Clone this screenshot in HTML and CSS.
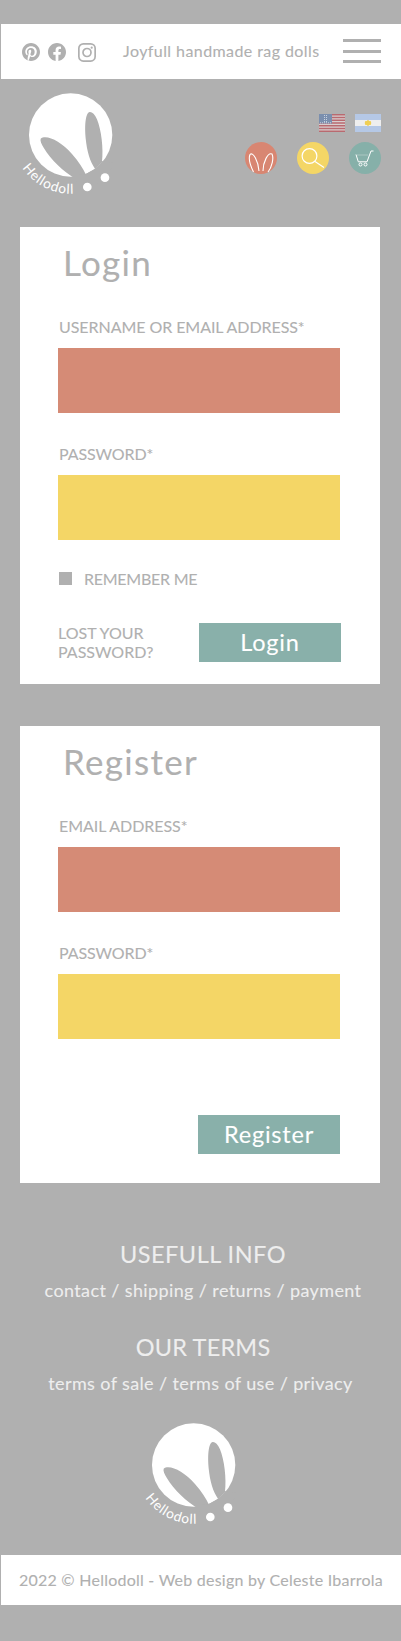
FILE: index.html
```html
<!DOCTYPE html>
<html lang="en">
<head>
<meta charset="utf-8">
<title>Hellodoll - Login</title>
<link rel="stylesheet" href="styles.css">
</head>
<body>
<svg width="0" height="0" class="defs" aria-hidden="true">
  <symbol id="logo" viewBox="60 30 280 320">
    <circle cx="212" cy="165" r="125" fill="#fff"/>
    <path d="M122 176C138 162 182 182 216 222C236 245 250 266 258 284L226 296C190 276 152 238 132 205C124 192 120 182 122 176Z" fill="#b0b0b0"/>
    <path d="M269 96C257 98 253 135 257 175C261 215 270 245 285 266L306 246C311 205 304 150 291 118C284 102 276 95 269 96Z" fill="#b0b0b0"/>
    <path d="M222 287L258 282L285 266L308 243L345 250L300 310L222 305Z" fill="#b0b0b0"/>
    <circle cx="315" cy="293" r="13" fill="#fff"/>
    <circle cx="262" cy="321" r="13" fill="#fff"/>
    <path id="arc" d="M67 264A176 176 0 0 0 242 339" fill="none"/>
    <text class="logo-text"><textPath href="#arc">Hellodoll</textPath></text>
  </symbol>
</svg>
<header class="topbar">
  <div class="social">
    <svg class="pin" width="18" height="18" viewBox="0 0 24 24"><path fill="#b0b0b0" d="M12 0C5.4 0 0 5.4 0 12c0 5.1 3.2 9.4 7.6 11.2-.1-.9-.2-2.4 0-3.4l1.4-6s-.4-.7-.4-1.8c0-1.700 1-2.900 2.200-2.900 1 0 1.500.8 1.500 1.700 0 1-.7 2.600-1 4-.3 1.200.6 2.200 1.800 2.200 2.100 0 3.800-2.200 3.800-5.500 0-2.900-2.100-4.900-5-4.900-3.400 0-5.400 2.600-5.400 5.200 0 1 .4 2.100.9 2.700.1.100.1.200.1.300l-.3 1.400c-.1.200-.2.300-.4.200-1.500-.7-2.400-2.900-2.400-4.700 0-3.800 2.800-7.300 7.900-7.300 4.200 0 7.400 3 7.400 6.900 0 4.100-2.600 7.500-6.200 7.500-1.200 0-2.400-.6-2.700-1.400l-.8 2.900c-.3 1-1 2.300-1.500 3.100 1.100.4 2.300.6 3.500.6 6.600 0 12-5.400 12-12S18.600 0 12 0z"/></svg>
    <svg class="fb" width="18" height="18" viewBox="0 0 24 24"><path fill="#b0b0b0" d="M24 12.070C24 5.410 18.630 0 12 0S0 5.400 0 12.070C0 18.100 4.390 23.100 10.130 24v-8.440H7.080v-3.490h3.040V9.410c0-3.020 1.800-4.700 4.540-4.700 1.310 0 2.680.24 2.680.24v2.970h-1.500c-1.500 0-1.960.93-1.960 1.890v2.260h3.320l-.53 3.500h-2.800V24C19.620 23.100 24 18.100 24 12.070"/></svg>
    <svg class="ig" width="18" height="19" viewBox="0 0 18 19"><g fill="none" stroke="#b0b0b0" stroke-width="1.700"><rect x=".85" y=".85" width="16.300" height="17.200" rx="4.500"/><circle cx="9" cy="9.500" r="4"/></g><circle cx="13.700" cy="4.700" r="1.100" fill="#b0b0b0"/></svg>
  </div>
  <p class="tagline">Joyfull handmade rag dolls</p>
  <button class="burger" aria-label="Menu"><i></i><i></i><i></i></button>
</header>
<section class="brand">
  <svg class="logo" width="93.300" height="106.700"><use href="#logo"/></svg>
  <div class="tools">
    <div class="flags">
      <svg width="26" height="18" viewBox="0 0 26 18"><path fill="#d8cfcf" d="M0 0h26v18H0z"/><path stroke="#b96a70" stroke-width="1.400" d="M0 .7h26M0 3.500h26M0 6.200h26M0 9h26M0 11.800h26M0 14.500h26M0 17.300h26"/><path fill="#7b8fae" d="M0 0h13v9.500H0z"/><path stroke="#c9d2df" stroke-width="1" stroke-dasharray="1 1" d="M5.500 1v8M7.500 1v8M1 8.800h11"/></svg>
      <svg width="26" height="18" viewBox="0 0 26 18"><path fill="#b5c8e6" d="M0 0h26v18H0z"/><path fill="#eee" d="M0 6h26v6H0z"/><path fill="#f0cf55" d="M13 5.800l1.200 1.200 1.800.2v1.300l.5.500-.5.500v1.300l-1.800.2-1.200 1.200-1.200-1.200-1.800-.2v-1.300L9.500 9l.5-.5V7.200l1.800-.2z"/></svg>
    </div>
    <div class="rounds">
      <svg width="32" height="32" viewBox="0 0 32 32"><circle cx="16" cy="16" r="16" fill="#d88672"/><path fill="none" stroke="#fff" stroke-width="1.100" d="M8.500 30C5 23 3.500 16 5 12.500C8 9 13.500 20 14 29M18 29C18 20 23 10 27 12C29 16 27 25 23 30"/></svg>
      <svg width="32" height="32" viewBox="0 0 32 32"><circle cx="16" cy="16" r="16" fill="#f4d666"/><g fill="none" stroke="#fff" stroke-width="1.200"><circle cx="12.500" cy="14" r="7.400"/><path d="M18 19.500L27 25.500"/></g></svg>
      <svg width="32" height="32" viewBox="0 0 32 32"><circle cx="16" cy="16" r="16" fill="#86b0a9"/><g fill="none" stroke="#fff" stroke-width="1"><path d="M7 12.500L9.300 19.800H18L22 9H24.500"/><path stroke-opacity=".3" d="M8 13H19"/><circle cx="11.500" cy="22.500" r="1.500"/><circle cx="16.500" cy="22.500" r="1.500"/></g></svg>
    </div>
  </div>
</section>
<main>
  <form class="card">
    <h1 class="title">Login</h1>
    <label class="label" for="user">USERNAME OR EMAIL ADDRESS*</label>
    <input id="user" class="field coral" type="text">
    <label class="label tight" for="pass">PASSWORD*</label>
    <input id="pass" class="field yellow" type="password">
    <div class="remember"><i class="box"></i>REMEMBER ME</div>
    <div class="actions">
      <a class="lost">LOST YOUR<br>PASSWORD?</a>
      <button type="button" class="btn">Login</button>
    </div>
  </form>
  <form class="card second">
    <h1 class="title">Register</h1>
    <label class="label" for="email">EMAIL ADDRESS*</label>
    <input id="email" class="field coral" type="text">
    <label class="label tight" for="newpass">PASSWORD*</label>
    <input id="newpass" class="field yellow" type="password">
    <div class="actions only">
      <button type="button" class="btn">Register</button>
    </div>
  </form>
</main>
<footer>
  <h2 class="fh info">USEFULL INFO</h2>
  <p class="fl">contact / shipping / returns / payment</p>
  <h2 class="fh next">OUR TERMS</h2>
  <p class="fl terms">terms of sale / terms of use / privacy</p>
  <svg class="logo" width="93.300" height="106.700"><use href="#logo"/></svg>
  <p class="copy">2022 © Hellodoll - Web design by Celeste Ibarrola</p>
</footer>
</body>
</html>
```
FILE: styles.css
```css
* { box-sizing: border-box; margin: 0; padding: 0; }
body { background: #b0b0b0; color: #b0b0b0; font-family: Lato, sans-serif; font-size: 16px; width: 401px; padding-top: 24px; -webkit-text-stroke: 0.1px currentColor; }
h1, h2 { font-weight: 400; }
svg { display: block; }
.defs { position: absolute; }
.topbar { margin-left: 1px; height: 54.500px; background: #fff; display: flex; align-items: flex-start; }
.social { display: flex; padding: 19px 0 0 21px; width: 121px; }
.fb { margin-left: 8px; }
.ig { margin-left: 12px; }
.tagline { width: 221px; padding: 17px 0 0 1px; line-height: 20px; white-space: nowrap; letter-spacing: 0.420px; }
.burger { width: 38px; height: 24px; margin-top: 15px; border: 0; background: none; display: flex; flex-direction: column; justify-content: space-between; }
.burger i { height: 3px; width: 38px; background: #b0b0b0; }
.brand { display: flex; justify-content: space-between; padding: 11.500px 20px 0; height: 148.500px; }
.logo-text { font: 41px Lato, sans-serif; fill: #fff; letter-spacing: 2.300px; }
.tools { padding-top: 24px; display: flex; flex-direction: column; align-items: flex-end; gap: 10px; }
.flags { display: flex; gap: 10px; }
.rounds { display: flex; gap: 20px; }
.card { display: block; margin: 0 21px 0 20px; height: 457px; background: #fff; padding: 14px 39px 0 38px; }
.second { margin-top: 42px; }
.title { font-size: 35px; line-height: 42px; padding-left: 5px; margin-bottom: 34px; letter-spacing: 1.300px; }
.label { display: block; font-size: 16px; line-height: 20px; padding-left: 1px; white-space: nowrap; letter-spacing: -0.060px; }
.tight { letter-spacing: -0.100px; }
.field { display: block; width: 282px; height: 65px; border: 0; margin: 11px 0 31px; }
.coral { background: #d58b76; }
.yellow { background: #f4d666; margin-bottom: 29px; }
.remember { display: flex; line-height: 20px; height: 20px; letter-spacing: -0.250px; }
.box { width: 13px; height: 13px; background: #b0b0b0; margin: 3px 12px 0 1px; }
.actions { display: flex; justify-content: space-between; width: 283px; margin-top: 34px; white-space: nowrap; }
.only { width: 282px; justify-content: flex-end; margin-top: 76px; }
.lost { line-height: 19px; }
.btn { width: 142px; height: 39px; border: 0; background: #89b0aa; color: #fff; font: 23.500px/39px Lato, sans-serif; letter-spacing: 0.800px; }
footer { text-align: center; padding-top: 57px; white-space: nowrap; }
.fh { color: #eee; font-size: 23.500px; line-height: 28px; padding-left: 5px; }
.info { letter-spacing: 0.500px; }
.fl { color: #eee; font-size: 18px; line-height: 22px; margin-top: 10.500px; padding-left: 5px; letter-spacing: 0.380px; }
.next { margin-top: 32.500px; letter-spacing: 0.200px; }
.terms { padding-left: 0; }
footer .logo { margin: 26.500px 0 0 143px; }
.copy { margin: 28.300px 0 0 1px; height: 50px; background: #fff; line-height: 49px; letter-spacing: 0.240px; }
```
